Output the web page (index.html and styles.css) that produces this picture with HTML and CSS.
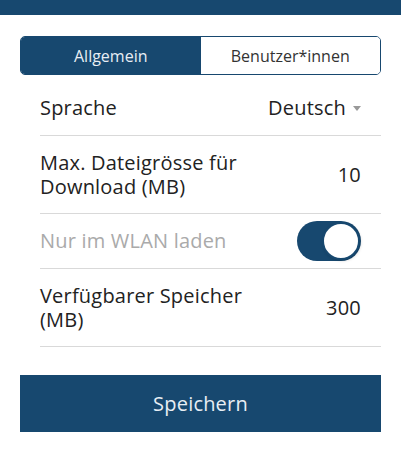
FILE: index.html
```html
<!DOCTYPE html>
<html lang="de">
<head>
<meta charset="utf-8">
<link rel="stylesheet" href="styles.css">
</head>
<body>
<div class="topbar"></div>
<main class="content">
  <div class="segmented">
    <div class="seg seg-active">Allgemein</div>
    <div class="seg">Benutzer*innen</div>
  </div>
  <div class="list">
    <div class="row row-single">
      <span class="label">Sprache</span>
      <span class="value select">Deutsch <span class="caret"></span></span>
    </div>
    <div class="row row-double">
      <span class="label"><span class="line">Max. Dateigrösse für</span><span class="line">Download (MB)</span></span>
      <span class="value">10</span>
    </div>
    <div class="row row-single">
      <span class="label label-disabled">Nur im WLAN laden</span>
      <span class="toggle"><span class="knob"></span></span>
    </div>
    <div class="row row-double">
      <span class="label"><span class="line">Verfügbarer Speicher</span><span class="line">(MB)</span></span>
      <span class="value">300</span>
    </div>
  </div>
  <button class="save">Speichern</button>
</main>
</body>
</html>
```
FILE: styles.css
```css
* { box-sizing: border-box; }
body {
  margin: 0;
  background: #fff;
  font-family: "Open Sans", "Lato", sans-serif;
  color: #222;
}
.topbar {
  height: 15px;
  background: #17486f;
}
.content {
  padding: 21px 20px 0;
}
.segmented {
  display: flex;
  height: 39px;
  border: 1px solid #17486f;
  border-radius: 5px;
  overflow: hidden;
}
.seg {
  flex: 1;
  display: flex;
  align-items: center;
  justify-content: center;
  font-size: 16px;
  color: #333;
  background: #fff;
}
.seg-active {
  background: #17486f;
  color: #e8eef4;
}
.list {
  margin: 6px 0 0 20px;
}
.row {
  display: flex;
  align-items: center;
  justify-content: space-between;
  padding-right: 20px;
  border-bottom: 1px solid #d9d9d9;
  font-size: 20px;
  letter-spacing: 0.2px;
  line-height: 24px;
}
.row-single { height: 55px; }
.row-double { height: 78px; }
.line { display: block; }
.label-disabled { color: #aaa; }
.select {
  display: flex;
  align-items: center;
  gap: 7px;
}
.caret {
  width: 0;
  height: 0;
  border-left: 4.5px solid transparent;
  border-right: 4.5px solid transparent;
  border-top: 5px solid #999;
}
.toggle {
  position: relative;
  width: 64px;
  height: 40px;
  border-radius: 20px;
  background: #17486f;
}
.knob {
  position: absolute;
  right: 1px;
  top: 1px;
  width: 38px;
  height: 38px;
  border-radius: 50%;
  background: #fff;
  border: 2px solid #17486f;
  box-shadow: 1px 1px 3px rgba(0,0,0,0.15);
}
.save {
  display: block;
  width: 100%;
  height: 57px;
  margin-top: 28px;
  border: none;
  background: #17486f;
  color: #e8eef4;
  font-family: inherit;
  font-size: 20px;
  letter-spacing: 0.2px;
}
```
